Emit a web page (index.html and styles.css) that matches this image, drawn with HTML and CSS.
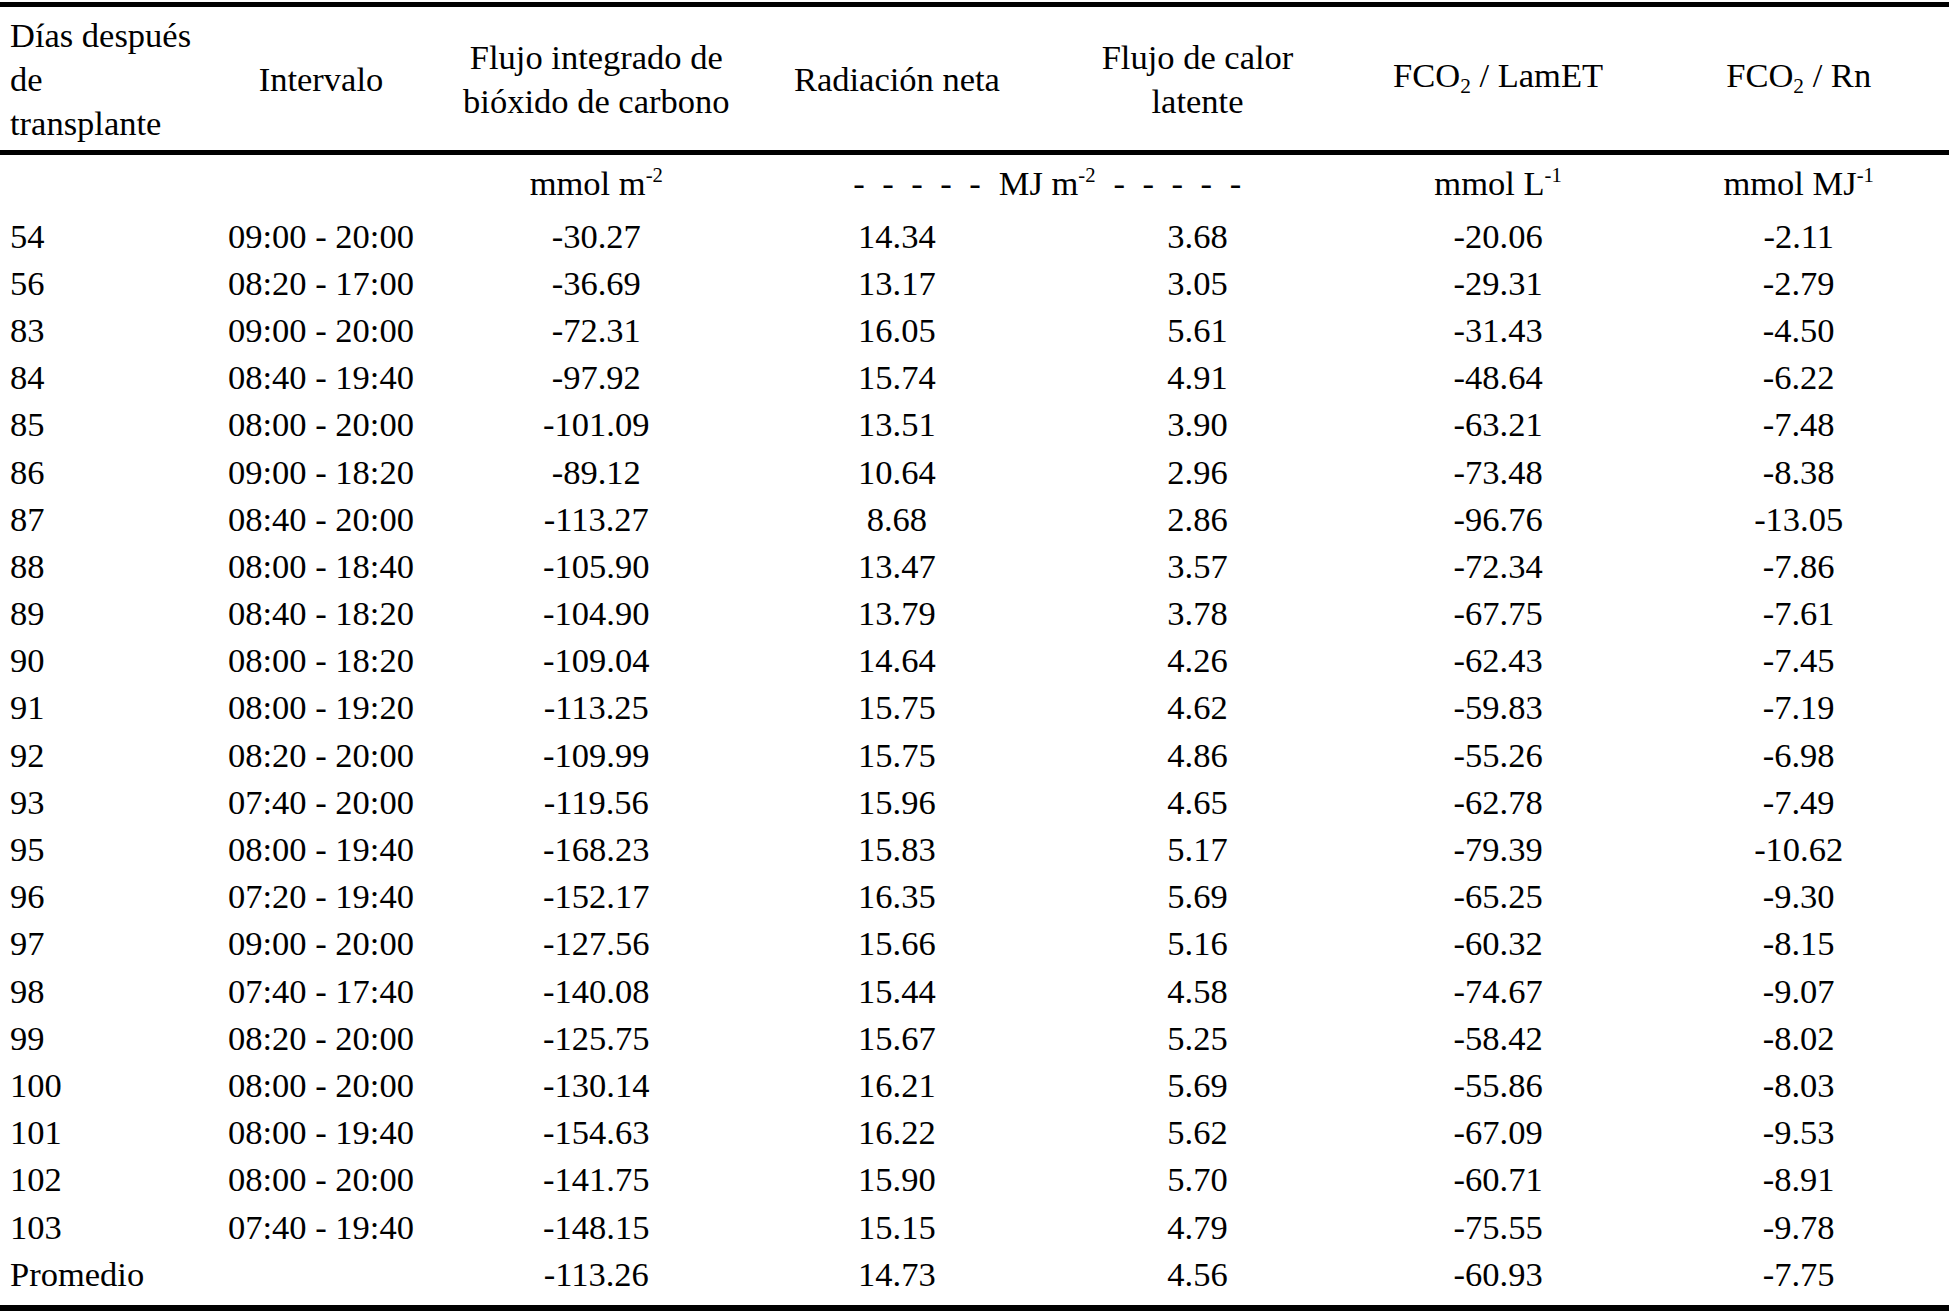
FILE: index.html
```html
<!DOCTYPE html>
<html lang="es">
<head>
<meta charset="utf-8">
<title>Flujos de CO2</title>
<link rel="stylesheet" href="styles.css">
</head>
<body>
<table class="data">
  <colgroup>
    <col class="c-day"><col class="c-int"><col class="c-num"><col class="c-num"><col class="c-num"><col class="c-num"><col class="c-num">
  </colgroup>
  <thead>
    <tr class="head">
      <th class="left">Días después<br>de<br>transplante</th>
      <th>Intervalo</th>
      <th>Flujo integrado de<br>bióxido de carbono</th>
      <th>Radiación neta</th>
      <th>Flujo de calor<br>latente</th>
      <th class="subhead">FCO<sub>2</sub> / LamET</th>
      <th class="subhead">FCO<sub>2</sub> / Rn</th>
    </tr>
  </thead>
  <tbody>
    <tr class="units">
      <td></td>
      <td></td>
      <td>mmol m<sup>-2</sup></td>
      <td colspan="2"><span class="dashes dl">- - - - -</span>MJ m<sup>-2</sup><span class="dashes dr">- - - - -</span></td>
      <td>mmol L<sup>-1</sup></td>
      <td>mmol MJ<sup>-1</sup></td>
    </tr>
    <tr><td class="left">54</td><td>09:00 - 20:00</td><td>-30.27</td><td>14.34</td><td>3.68</td><td>-20.06</td><td>-2.11</td></tr>
    <tr><td class="left">56</td><td>08:20 - 17:00</td><td>-36.69</td><td>13.17</td><td>3.05</td><td>-29.31</td><td>-2.79</td></tr>
    <tr><td class="left">83</td><td>09:00 - 20:00</td><td>-72.31</td><td>16.05</td><td>5.61</td><td>-31.43</td><td>-4.50</td></tr>
    <tr><td class="left">84</td><td>08:40 - 19:40</td><td>-97.92</td><td>15.74</td><td>4.91</td><td>-48.64</td><td>-6.22</td></tr>
    <tr><td class="left">85</td><td>08:00 - 20:00</td><td>-101.09</td><td>13.51</td><td>3.90</td><td>-63.21</td><td>-7.48</td></tr>
    <tr><td class="left">86</td><td>09:00 - 18:20</td><td>-89.12</td><td>10.64</td><td>2.96</td><td>-73.48</td><td>-8.38</td></tr>
    <tr><td class="left">87</td><td>08:40 - 20:00</td><td>-113.27</td><td>8.68</td><td>2.86</td><td>-96.76</td><td>-13.05</td></tr>
    <tr><td class="left">88</td><td>08:00 - 18:40</td><td>-105.90</td><td>13.47</td><td>3.57</td><td>-72.34</td><td>-7.86</td></tr>
    <tr><td class="left">89</td><td>08:40 - 18:20</td><td>-104.90</td><td>13.79</td><td>3.78</td><td>-67.75</td><td>-7.61</td></tr>
    <tr><td class="left">90</td><td>08:00 - 18:20</td><td>-109.04</td><td>14.64</td><td>4.26</td><td>-62.43</td><td>-7.45</td></tr>
    <tr><td class="left">91</td><td>08:00 - 19:20</td><td>-113.25</td><td>15.75</td><td>4.62</td><td>-59.83</td><td>-7.19</td></tr>
    <tr><td class="left">92</td><td>08:20 - 20:00</td><td>-109.99</td><td>15.75</td><td>4.86</td><td>-55.26</td><td>-6.98</td></tr>
    <tr><td class="left">93</td><td>07:40 - 20:00</td><td>-119.56</td><td>15.96</td><td>4.65</td><td>-62.78</td><td>-7.49</td></tr>
    <tr><td class="left">95</td><td>08:00 - 19:40</td><td>-168.23</td><td>15.83</td><td>5.17</td><td>-79.39</td><td>-10.62</td></tr>
    <tr><td class="left">96</td><td>07:20 - 19:40</td><td>-152.17</td><td>16.35</td><td>5.69</td><td>-65.25</td><td>-9.30</td></tr>
    <tr><td class="left">97</td><td>09:00 - 20:00</td><td>-127.56</td><td>15.66</td><td>5.16</td><td>-60.32</td><td>-8.15</td></tr>
    <tr><td class="left">98</td><td>07:40 - 17:40</td><td>-140.08</td><td>15.44</td><td>4.58</td><td>-74.67</td><td>-9.07</td></tr>
    <tr><td class="left">99</td><td>08:20 - 20:00</td><td>-125.75</td><td>15.67</td><td>5.25</td><td>-58.42</td><td>-8.02</td></tr>
    <tr><td class="left">100</td><td>08:00 - 20:00</td><td>-130.14</td><td>16.21</td><td>5.69</td><td>-55.86</td><td>-8.03</td></tr>
    <tr><td class="left">101</td><td>08:00 - 19:40</td><td>-154.63</td><td>16.22</td><td>5.62</td><td>-67.09</td><td>-9.53</td></tr>
    <tr><td class="left">102</td><td>08:00 - 20:00</td><td>-141.75</td><td>15.90</td><td>5.70</td><td>-60.71</td><td>-8.91</td></tr>
    <tr><td class="left">103</td><td>07:40 - 19:40</td><td>-148.15</td><td>15.15</td><td>4.79</td><td>-75.55</td><td>-9.78</td></tr>
    <tr class="last"><td class="left">Promedio</td><td></td><td>-113.26</td><td>14.73</td><td>4.56</td><td>-60.93</td><td>-7.75</td></tr>
  </tbody>
</table>
</body>
</html>
```

FILE: styles.css
```css
html, body {
  margin: 0;
  padding: 0;
  background: #ffffff;
}

body {
  padding-top: 2px;
  color: #000000;
  font-family: "Liberation Serif", "Times New Roman", serif;
  font-size: 34.5px;
  overflow: hidden;
}

.data {
  width: 1949px;
  table-layout: fixed;
  border-collapse: separate;
  border-spacing: 0;
}

.c-day { width: 196px; }
.c-int { width: 250px; }
.c-num { width: 300.6px; }

.data th,
.data td {
  padding: 0;
  text-align: center;
  vertical-align: middle;
  white-space: nowrap;
  font-weight: normal;
}

.data .left {
  text-align: left;
  padding-left: 10px;
}

.head th {
  border-top: 5px solid #000;
  border-bottom: 5px solid #000;
  line-height: 44px;
  padding-top: 5.5px;
  padding-bottom: 5.5px;
}

.head th.subhead {
  padding-bottom: 12.5px;
}

.data td {
  line-height: 47.18px;
}

.units td {
  line-height: 57.6px;
}

.last td {
  padding-bottom: 7.4px;
  border-bottom: 6px solid #000;
}

sup {
  font-size: 0.6em;
  line-height: 0;
  vertical-align: 0.62em;
}

sub {
  font-size: 0.62em;
  line-height: 0;
  vertical-align: -0.3em;
}

.dashes {
  word-spacing: 8.9px;
}

.dl {
  margin-right: 18px;
}

.dr {
  margin-left: 18px;
}
```
